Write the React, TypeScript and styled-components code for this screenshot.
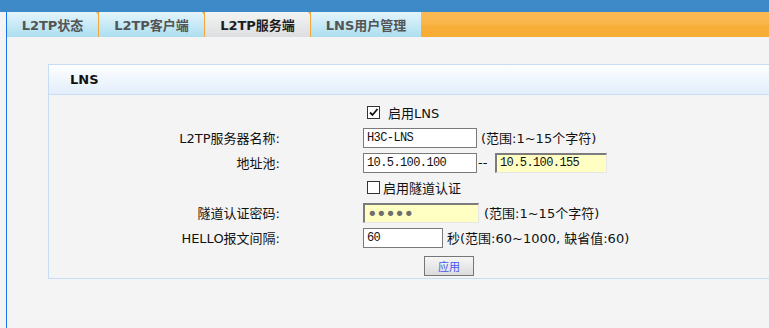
import React from 'react'
import styled, { createGlobalStyle } from 'styled-components'

const GlobalStyle = createGlobalStyle`
  html, body {
    margin: 0;
    padding: 0;
    background: #f4f4f4;
    overflow: hidden;
  }
  body {
    font-family: "DejaVu Sans", "Noto Sans CJK SC", sans-serif;
    font-size: 13px;
    color: #111;
  }
`

const Page = styled.div`
  width: 769px;
  height: 328px;
  display: flex;
  flex-direction: column;
  background: #f4f4f4;
`

const TopBar = styled.div`
  height: 12px;
  background: #3e8ac9;
  flex: 0 0 auto;
`

const Frame = styled.div`
  flex: 1;
  margin-left: 6px;
  border-left: 1px solid #1a72ee;
  display: flex;
  flex-direction: column;
  min-height: 0;
`

const TabBar = styled.div`
  height: 25px;
  display: flex;
  background: linear-gradient(to bottom, #fbb953 0%, #fab64b 45%, #f7ae37 60%, #f7ad34 100%);
`

const Tab = styled.div<{ $active?: boolean; $w: number }>`
  position: relative;
  width: ${p => p.$w}px;
  box-sizing: border-box;
  display: flex;
  align-items: center;
  justify-content: center;
  font-weight: bold;
  font-size: 13px;
  color: ${p => (p.$active ? '#1e1e1e' : '#545454')};
  background: ${p =>
    p.$active
      ? 'linear-gradient(to bottom, #f4f4f4, #dcdee0)'
      : 'linear-gradient(to bottom, #e4f5fb, #acdef0)'};
  border-right: 1px solid #f5a73a;

  &::after {
    content: '';
    position: absolute;
    right: -4px;
    top: 0;
    border-left: 3px solid transparent;
    border-right: 3px solid transparent;
    border-top: 4px solid #f5a73a;
  }
`

const LastTab = styled(Tab)`
  border-right: none;
  &::after {
    display: none;
  }
`

const Content = styled.div`
  padding: 27px 0 0 41px;
`

const Panel = styled.div`
  width: 740px;
  border: 1px solid #c6ddf5;
  border-right: none;
`

const PanelHeader = styled.div`
  height: 29px;
  display: flex;
  align-items: center;
  padding-left: 21px;
  font-weight: bold;
  font-size: 13px;
  color: #111;
  background: linear-gradient(to bottom, #fdfeff, #e2eefb);
  border-bottom: 1px solid #c6ddf5;
`

const PanelBody = styled.div`
  padding: 5px 0 2px;
`

const Row = styled.div`
  display: grid;
  grid-template-columns: 231px 1fr;
  column-gap: 83px;
  align-items: center;
  height: 25px;
`

const Label = styled.div`
  text-align: right;
  white-space: nowrap;
`

const Value = styled.div`
  display: flex;
  align-items: center;
  white-space: nowrap;
`

const CheckLabel = styled.label<{ $gap: number }>`
  display: flex;
  align-items: center;
  gap: ${p => p.$gap}px;
  margin-left: 4px;
`

const Box = styled.span`
  width: 11px;
  height: 11px;
  border: 1px solid #333;
  background: #fff;
  display: flex;
  align-items: center;
  justify-content: center;
`

const TextInput = styled.input<{ $w: number; $hint?: boolean }>`
  width: ${p => p.$w}px;
  height: 20px;
  box-sizing: border-box;
  padding: 0 3px;
  font-family: "Liberation Mono", monospace;
  font-size: 12px;
  letter-spacing: -0.6px;
  color: #111;
  background: ${p => (p.$hint ? '#ffffc4' : '#fff')};
  border: 1px solid #7a7a7a;
  ${p =>
    p.$hint
      ? `border-top: 2px solid #7c7c7c; border-left: 2px solid #7c7c7c;
         border-right: 1px solid #e6e6e6; border-bottom: 1px solid #e6e6e6;`
      : ''}
  outline: none;
`

const PasswordInput = styled(TextInput)`
  font-family: "DejaVu Sans", sans-serif;
  font-size: 18px;
  letter-spacing: -1.5px;
  color: #6e6e6e;
  padding-left: 2px;
`

const Note = styled.span<{ $gap: number }>`
  margin-left: ${p => p.$gap}px;
`

const Dash = styled.span`
  width: 17px;
  padding-left: 1px;
`

const ButtonRow = styled.div`
  padding: 6px 0 0 375px;
`

const ApplyButton = styled.button`
  width: 50px;
  height: 20px;
  font-family: "Noto Sans CJK SC", sans-serif;
  font-size: 11px;
  color: #4757ee;
  border: 1px solid #767676;
  background: linear-gradient(to bottom, #f6f6f6, #dcdcdc);
  padding: 0;
`

const Check = () => (
  <svg width="11" height="11" viewBox="0 0 11 11">
    <path d="M2 5.5 L4.5 8 L9.5 2" fill="none" stroke="#111" strokeWidth="1.8" />
  </svg>
)

const tabs = [
  { name: 'L2TP状态', w: 92 },
  { name: 'L2TP客户端', w: 106 },
  { name: 'L2TP服务端', w: 106, active: true }
]

export default function App() {
  return (
    <Page>
      <GlobalStyle />
      <TopBar />
      <Frame>
        <TabBar>
          {tabs.map(t => (
            <Tab key={t.name} $w={t.w} $active={t.active}>
              {t.name}
            </Tab>
          ))}
          <LastTab $w={110}>LNS用户管理</LastTab>
        </TabBar>
        <Content>
          <Panel>
            <PanelHeader>LNS</PanelHeader>
            <PanelBody>
              <Row>
                <Label />
                <Value>
                  <CheckLabel $gap={8}>
                    <Box>
                      <Check />
                    </Box>
                    启用LNS
                  </CheckLabel>
                </Value>
              </Row>
              <Row>
                <Label>L2TP服务器名称:</Label>
                <Value>
                  <TextInput $w={114} defaultValue="H3C-LNS" />
                  <Note $gap={4}>(范围:1~15个字符)</Note>
                </Value>
              </Row>
              <Row>
                <Label>地址池:</Label>
                <Value>
                  <TextInput $w={114} defaultValue="10.5.100.100" />
                  <Dash>--</Dash>
                  <TextInput $w={112} $hint defaultValue="10.5.100.155" />
                </Value>
              </Row>
              <Row>
                <Label />
                <Value>
                  <CheckLabel $gap={3}>
                    <Box />
                    启用隧道认证
                  </CheckLabel>
                </Value>
              </Row>
              <Row>
                <Label>隧道认证密码:</Label>
                <Value>
                  <PasswordInput $w={116} $hint type="password" defaultValue="12345" />
                  <Note $gap={5}>(范围:1~15个字符)</Note>
                </Value>
              </Row>
              <Row>
                <Label>HELLO报文间隔:</Label>
                <Value>
                  <TextInput $w={80} defaultValue="60" />
                  <Note $gap={4}>秒(范围:60~1000, 缺省值:60)</Note>
                </Value>
              </Row>
              <ButtonRow>
                <ApplyButton>应用</ApplyButton>
              </ButtonRow>
            </PanelBody>
          </Panel>
        </Content>
      </Frame>
    </Page>
  )
}
